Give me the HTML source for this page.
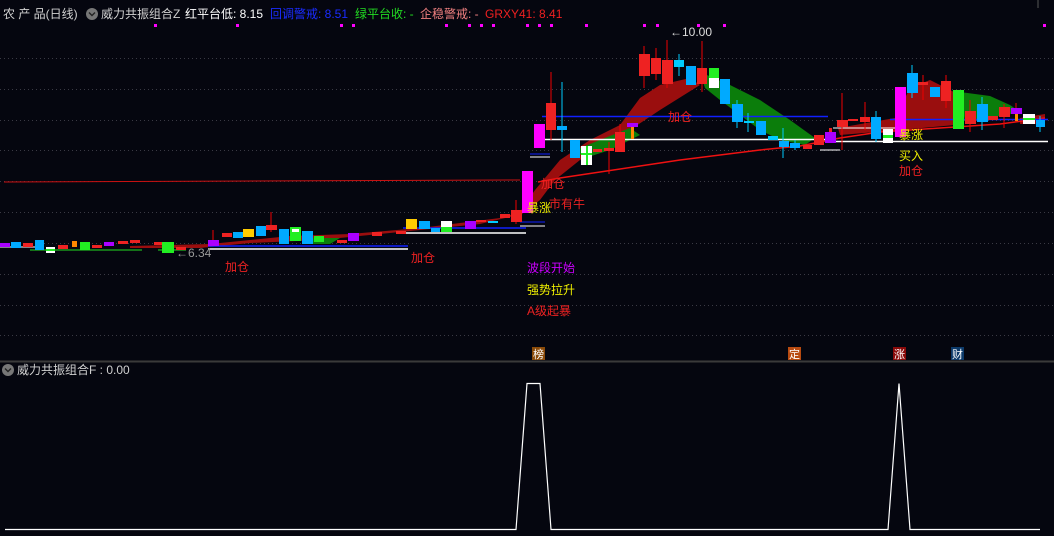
<!DOCTYPE html><html><head><meta charset="utf-8"><style>
body{margin:0;background:#05060f;width:1054px;height:536px;overflow:hidden;font-family:"Liberation Sans","Noto Sans CJK SC",sans-serif}
svg{display:block}
text{font-family:"Liberation Sans","Noto Sans CJK SC",sans-serif;font-size:12px}
</style></head><body>
<svg width="1054" height="536" xmlns="http://www.w3.org/2000/svg">
<rect width="1054" height="536" fill="#05060f"/>
<g stroke="#3a3a44" stroke-dasharray="1,3" stroke-width="1">
<line x1="0" y1="58.5" x2="1054" y2="58.5"/><line x1="0" y1="89.5" x2="1054" y2="89.5"/><line x1="0" y1="120.5" x2="1054" y2="120.5"/><line x1="0" y1="150.5" x2="1054" y2="150.5"/><line x1="0" y1="181.5" x2="1054" y2="181.5"/><line x1="0" y1="212.5" x2="1054" y2="212.5"/><line x1="0" y1="243.5" x2="1054" y2="243.5"/><line x1="0" y1="274.5" x2="1054" y2="274.5"/><line x1="0" y1="305.5" x2="1054" y2="305.5"/><line x1="0" y1="335.5" x2="1054" y2="335.5"/>
</g>
<line x1="1038" y1="0" x2="1038" y2="8" stroke="#555"/>
<line x1="0" y1="361.5" x2="1054" y2="361.5" stroke="#3a3a3a" stroke-width="2"/>
<text x="3" y="18" fill="#d0d0d0">农 产 品(日线)</text>
<circle cx="92" cy="14" r="6" fill="#777"/><path d="M89 12.5l3 3 3-3" stroke="#222" fill="none" stroke-width="1.4"/>
<text x="101" y="18" fill="#d0d0d0">威力共振组合Z</text>
<text x="185" y="18" fill="#ffffff">红平台低: 8.15</text>
<text x="270" y="18" fill="#1a2cff">回调警戒: 8.51</text>
<text x="355" y="18" fill="#22dd22">绿平台收: -</text>
<text x="420" y="18" fill="#f08080">企稳警戒: -</text>
<text x="485" y="18" fill="#ee2020">GRXY41: 8.41</text>
<g fill="#ff00ff">
<rect x="154" y="24" width="3" height="3"/><rect x="236" y="24" width="3" height="3"/><rect x="340" y="24" width="3" height="3"/><rect x="352" y="24" width="3" height="3"/><rect x="445" y="24" width="3" height="3"/><rect x="468" y="24" width="3" height="3"/><rect x="480" y="24" width="3" height="3"/><rect x="492" y="24" width="3" height="3"/><rect x="526" y="24" width="3" height="3"/><rect x="538" y="24" width="3" height="3"/><rect x="550" y="24" width="3" height="3"/><rect x="585" y="24" width="3" height="3"/><rect x="643" y="24" width="3" height="3"/><rect x="656" y="24" width="3" height="3"/><rect x="697" y="24" width="3" height="3"/><rect x="723" y="24" width="3" height="3"/><rect x="1043" y="24" width="3" height="3"/>
</g>
<polygon points="130,246 210,244 290,236 350,234 420,228 500,218 520,212 535,190 560,160 590,140 620,125 640,98 660,85 690,78 700,85 660,110 630,130 605,145 580,160 555,180 540,200 522,214 480,224 400,232 320,240 250,243 200,248 130,248" fill="#9a0e0e"/>
<polygon points="700,72 730,85 760,100 790,120 815,138 805,145 780,140 760,130 740,115 720,100 705,88" fill="#0b7d0b"/>
<polygon points="575,150 600,140 630,128 640,135 610,150 585,158" fill="#0b7d0b"/>
<polygon points="310,238 340,238 330,244 305,244" fill="#0b7d0b"/>
<polygon points="838,128 895,118 910,88 930,80 950,90 960,95 955,125 900,130 840,135" fill="#9a0e0e"/>
<polygon points="960,92 990,96 1010,105 1020,112 990,118 965,122" fill="#0b7d0b"/>
<polygon points="1020,118 1045,114 1045,124 1020,124" fill="#9a0e0e"/>
<line x1="4" y1="182" x2="520" y2="180" stroke="#cc1111"/>
<polyline points="538,182 560,178 600,172 640,166 680,160 720,155 760,150 800,146 840,138 880,132 940,128 1000,124 1045,118" fill="none" stroke="#ee1111" stroke-width="1.5"/>
<line x1="542" y1="116.5" x2="828" y2="116.5" stroke="#1020ff" stroke-width="1.5"/>
<line x1="542" y1="139.5" x2="828" y2="139.5" stroke="#fff" stroke-width="1.5"/>
<line x1="832" y1="141.5" x2="1048" y2="141.5" stroke="#fff" stroke-width="1.5"/>
<line x1="890" y1="119.5" x2="1048" y2="119.5" stroke="#1020ff" stroke-width="1.5"/>
<line x1="833" y1="128" x2="898" y2="128" stroke="#fff"/>
<line x1="208" y1="246" x2="408" y2="246" stroke="#1020ff" stroke-width="1.5"/>
<line x1="208" y1="249" x2="408" y2="249" stroke="#fff" stroke-width="1.5"/>
<line x1="403" y1="228" x2="526" y2="228" stroke="#1020ff" stroke-width="1.5"/>
<line x1="403" y1="233" x2="526" y2="233" stroke="#fff" stroke-width="1.5"/>
<line x1="30" y1="250" x2="142" y2="250" stroke="#22dd22"/>
<line x1="158" y1="250" x2="186" y2="250" stroke="#22dd22"/>
<line x1="0" y1="247" x2="40" y2="247" stroke="#fff"/>
<line x1="520" y1="222" x2="545" y2="222" stroke="#1020ff"/><line x1="520" y1="226" x2="545" y2="226" stroke="#fff"/>
<line x1="530" y1="154" x2="550" y2="154" stroke="#1020ff"/><line x1="530" y1="157" x2="550" y2="157" stroke="#fff"/>
<line x1="820" y1="150" x2="840" y2="150" stroke="#fff"/>
<g stroke-width="1">
<line x1="213" y1="230" x2="213" y2="246" stroke="#e00"/><line x1="271" y1="212" x2="271" y2="232" stroke="#e00"/>
<line x1="516" y1="200" x2="516" y2="224" stroke="#e00"/>
<line x1="551" y1="72" x2="551" y2="140" stroke="#e00"/><line x1="562" y1="82" x2="562" y2="152" stroke="#0cf"/>
<line x1="620" y1="124" x2="620" y2="152" stroke="#e00"/><line x1="609" y1="142" x2="609" y2="174" stroke="#e00"/>
<line x1="644" y1="46" x2="644" y2="88" stroke="#e00"/><line x1="656" y1="48" x2="656" y2="80" stroke="#e00"/>
<line x1="667" y1="40" x2="667" y2="88" stroke="#e00"/><line x1="679" y1="54" x2="679" y2="76" stroke="#0cf"/>
<line x1="702" y1="41" x2="702" y2="92" stroke="#e00"/><line x1="737" y1="100" x2="737" y2="128" stroke="#0cf"/>
<line x1="748" y1="113" x2="748" y2="132" stroke="#0cf"/><line x1="783" y1="128" x2="783" y2="158" stroke="#0cf"/>
<line x1="795" y1="140" x2="795" y2="150" stroke="#0cf"/><line x1="842" y1="93" x2="842" y2="150" stroke="#e00"/>
<line x1="865" y1="102" x2="865" y2="130" stroke="#e00"/><line x1="876" y1="111" x2="876" y2="142" stroke="#0cf"/>
<line x1="912" y1="65" x2="912" y2="98" stroke="#0cf"/><line x1="923" y1="75" x2="923" y2="100" stroke="#e00"/>
<line x1="946" y1="75" x2="946" y2="108" stroke="#e00"/><line x1="970" y1="100" x2="970" y2="132" stroke="#e00"/>
<line x1="982" y1="97" x2="982" y2="130" stroke="#0cf"/><line x1="1004" y1="104" x2="1004" y2="128" stroke="#e00"/>
<line x1="1040" y1="116" x2="1040" y2="132" stroke="#0cf"/><line x1="1016" y1="103" x2="1016" y2="122" stroke="#e00"/>
</g>
<g>
<rect x="0" y="243" width="10" height="4" fill="#a0f"/><rect x="11" y="242" width="10" height="6" fill="#0af"/><rect x="23" y="243" width="10" height="4" fill="#e22"/><rect x="35" y="240" width="9" height="10" fill="#0af"/>
<rect x="46" y="247" width="9" height="6" fill="#fff"/><rect x="46" y="249" width="9" height="2" fill="#2e2"/><rect x="58" y="245" width="10" height="4" fill="#e22"/><rect x="72" y="241" width="5" height="6" fill="#f80"/>
<rect x="80" y="242" width="10" height="8" fill="#2e2"/><rect x="92" y="245" width="10" height="3" fill="#e22"/><rect x="104" y="242" width="10" height="4" fill="#a0f"/><rect x="118" y="241" width="10" height="3" fill="#e22"/>
<rect x="130" y="240" width="10" height="3" fill="#e22"/><rect x="154" y="242" width="8" height="3" fill="#e22"/><rect x="162" y="242" width="12" height="11" fill="#2e2"/><rect x="176" y="247" width="10" height="3" fill="#e22"/>
<rect x="208" y="240" width="11" height="6" fill="#a0f"/><rect x="222" y="233" width="10" height="4" fill="#e22"/><rect x="233" y="232" width="10" height="6" fill="#0af"/><rect x="243" y="229" width="11" height="8" fill="#fc0"/>
<rect x="256" y="226" width="10" height="10" fill="#0af"/><rect x="266" y="225" width="11" height="5" fill="#e22"/><rect x="279" y="229" width="10" height="15" fill="#0af"/><rect x="290" y="227" width="11" height="14" fill="#2e2"/><rect x="292" y="229" width="7" height="3" fill="#fff"/>
<rect x="302" y="231" width="11" height="13" fill="#0af"/><rect x="314" y="236" width="10" height="6" fill="#2e2"/><rect x="337" y="240" width="10" height="3" fill="#e22"/><rect x="348" y="233" width="11" height="8" fill="#a0f"/>
<rect x="372" y="232" width="10" height="4" fill="#e22"/><rect x="396" y="231" width="10" height="3" fill="#e22"/><rect x="406" y="219" width="11" height="10" fill="#fc0"/><rect x="419" y="221" width="11" height="8" fill="#0af"/>
<rect x="431" y="228" width="9" height="4" fill="#0af"/><rect x="441" y="221" width="11" height="11" fill="#fff"/><rect x="441" y="227" width="11" height="5" fill="#2e2"/><rect x="465" y="221" width="11" height="8" fill="#a0f"/>
<rect x="476" y="220" width="10" height="2" fill="#e22"/><rect x="488" y="221" width="10" height="2" fill="#0cf"/><rect x="500" y="214" width="10" height="4" fill="#e22"/><rect x="511" y="210" width="11" height="12" fill="#e22"/>
<rect x="522" y="171" width="11" height="42" fill="#f0f"/><rect x="534" y="124" width="11" height="24" fill="#f0f"/><rect x="546" y="103" width="10" height="27" fill="#e22"/><rect x="557" y="126" width="10" height="4" fill="#0af"/>
<rect x="570" y="140" width="10" height="18" fill="#0af"/><rect x="581" y="146" width="11" height="19" fill="#fff"/><rect x="581" y="153" width="11" height="2" fill="#2e2"/><rect x="586" y="146" width="2" height="19" fill="#2e2"/>
<rect x="593" y="149" width="9" height="3" fill="#e22"/><rect x="604" y="148" width="10" height="3" fill="#e22"/><rect x="615" y="132" width="10" height="20" fill="#e22"/><rect x="627" y="123" width="11" height="4" fill="#a0f"/><rect x="631" y="127" width="3" height="12" fill="#f80"/>
<rect x="639" y="54" width="11" height="22" fill="#e22"/><rect x="651" y="58" width="10" height="16" fill="#e22"/><rect x="662" y="60" width="11" height="24" fill="#e22"/><rect x="674" y="60" width="10" height="7" fill="#0cf"/>
<rect x="686" y="66" width="10" height="19" fill="#0af"/><rect x="697" y="68" width="10" height="16" fill="#e22"/><rect x="709" y="68" width="10" height="20" fill="#fff"/><rect x="709" y="68" width="10" height="10" fill="#2e2"/>
<rect x="720" y="79" width="10" height="25" fill="#0af"/><rect x="732" y="104" width="11" height="18" fill="#0af"/><rect x="744" y="121" width="10" height="2" fill="#0cf"/><rect x="756" y="121" width="10" height="14" fill="#0af"/>
<rect x="768" y="136" width="10" height="4" fill="#0cf"/><rect x="779" y="141" width="10" height="6" fill="#0af"/><rect x="790" y="143" width="10" height="5" fill="#0af"/><rect x="803" y="145" width="9" height="4" fill="#e22"/>
<rect x="814" y="135" width="10" height="10" fill="#e22"/><rect x="825" y="132" width="11" height="11" fill="#a0f"/><rect x="829" y="128" width="3" height="4" fill="#e22"/>
<rect x="837" y="120" width="11" height="7" fill="#e22"/><rect x="848" y="119" width="10" height="2" fill="#e22"/><rect x="860" y="117" width="10" height="5" fill="#e22"/><rect x="871" y="117" width="10" height="22" fill="#0af"/>
<rect x="883" y="129" width="10" height="14" fill="#fff"/><rect x="883" y="135" width="10" height="3" fill="#2e2"/><rect x="895" y="87" width="11" height="50" fill="#f0f"/><rect x="907" y="73" width="11" height="20" fill="#0af"/>
<rect x="918" y="82" width="10" height="3" fill="#e22"/><rect x="930" y="87" width="10" height="10" fill="#0af"/><rect x="941" y="81" width="10" height="20" fill="#e22"/><rect x="953" y="90" width="11" height="39" fill="#2e2"/>
<rect x="965" y="111" width="11" height="13" fill="#e22"/><rect x="977" y="104" width="11" height="18" fill="#0af"/><rect x="988" y="116" width="10" height="4" fill="#e22"/><rect x="999" y="107" width="11" height="10" fill="#e22"/>
<rect x="1011" y="108" width="11" height="6" fill="#a0f"/><rect x="1015" y="114" width="3" height="7" fill="#f80"/><rect x="1023" y="114" width="12" height="10" fill="#fff"/><rect x="1023" y="118" width="12" height="2" fill="#2e2"/><rect x="1036" y="120" width="9" height="7" fill="#0af"/>
</g>
<text x="670" y="36" fill="#ddd">←10.00</text>
<text x="176" y="257" fill="#999">←6.34</text>
<text x="225" y="271" fill="#e22">加仓</text>
<text x="411" y="262" fill="#e22">加仓</text>
<text x="541" y="188" fill="#e22">加仓</text>
<text x="549" y="208" fill="#e22">市有牛</text>
<text x="527" y="212" fill="#ee0">暴涨</text>
<text x="668" y="121" fill="#e22">加仓</text>
<text x="527" y="272" fill="#c0f">波段开始</text>
<text x="527" y="294" fill="#ee0">强势拉升</text>
<text x="527" y="315" fill="#e22">A级起暴</text>
<text x="899" y="139" fill="#ee0">暴涨</text>
<text x="899" y="160" fill="#ee0">买入</text>
<text x="899" y="175" fill="#e22">加仓</text>
<rect x="532" y="347" width="13" height="13" fill="#8a4a08"/><text x="533" y="358" fill="#fff" style="font-size:11px">榜</text>
<rect x="788" y="347" width="13" height="13" fill="#b84a10"/><text x="789" y="358" fill="#fff" style="font-size:11px">定</text>
<rect x="893" y="347" width="13" height="13" fill="#8a0a0a"/><text x="894" y="358" fill="#fff" style="font-size:11px">涨</text>
<rect x="951" y="347" width="13" height="13" fill="#0c3a6a"/><text x="952" y="358" fill="#fff" style="font-size:11px">财</text>
<circle cx="8" cy="370" r="6" fill="#777"/><path d="M5 368.5l3 3 3-3" stroke="#222" fill="none" stroke-width="1.4"/>
<text x="17" y="374" fill="#d0d0d0">威力共振组合F : 0.00</text>
<polyline points="5,529.5 516,529.5 527,383.5 540,383.5 551,529.5 888,529.5 899,383.5 910,529.5 1040,529.5" fill="none" stroke="#fff" stroke-width="1.2"/>
</svg>
</body></html>
